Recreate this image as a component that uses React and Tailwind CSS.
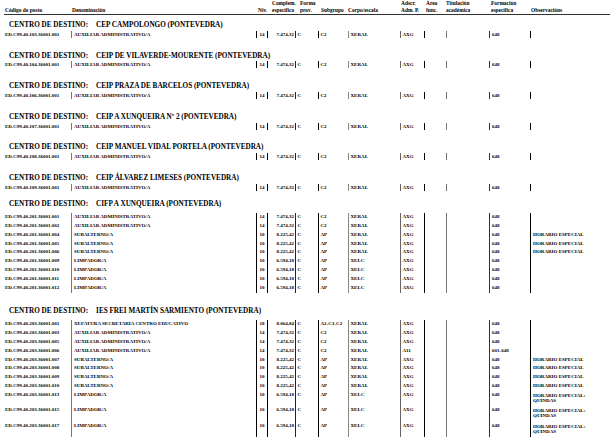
import React from "react";

const GRID =
  "grid grid-cols-[67px_185px_11px_28px_23px_30px_52px_24px_22px_43px_41px_80px]";

// cell styling per column: left rule + inner padding
const cells = [
  "pl-[1px]",
  "border-l border-[#777] pl-[2px]",
  "border-l border-black text-center",
  "border-l border-black text-right pr-[1px]",
  "border-l border-[#222] pl-[1.5px]",
  "border-l border-black pl-[1.5px]",
  "border-l border-[#888] pl-[1.5px]",
  "border-l border-[#666] pl-[1.5px]",
  "border-l border-black",
  "border-l border-[#777]",
  "border-l border-[#333] pl-[2px]",
  "border-l border-black pl-[2px]",
];

const heads = [
  { label: "Código do posto", pad: "pl-[1px]" },
  { label: "Denominación", pad: "pl-[1px]" },
  { label: "Niv.", pad: "pl-[2px]" },
  { top: "Complem.", label: "específico", pad: "pl-[5px]" },
  { top: "Forma", label: "prov.", pad: "pl-[5px]" },
  { label: "Subgrupo", pad: "pl-[3px]" },
  { label: "Corpo/escala", pad: "pl-[0px]" },
  { top: "Adscr.", label: "Adm. P.", pad: "pl-[1px]" },
  { top: "Área", label: "func.", pad: "pl-[2px]" },
  { top: "Titulación", label: "académica", pad: "pl-[0px]" },
  { top: "Formación", label: "específica", pad: "pl-[2px]" },
  { label: "Observacións", pad: "pl-[1px]" },
];

const aux = (code) => [code, "AUXILIAR ADMINISTRATIVO/A", "14", "7.474,32", "C", "C2", "XERAL", "AXG", "", "", "648", ""];
const sub = (code) => [code, "SUBALTERNO/A", "10", "8.225,42", "C", "AP", "XERAL", "AXG", "", "", "648", "HORARIO ESPECIAL"];
const limp = (code, obs = "") => [code, "LIMPADOR/A", "10", "6.594,18", "C", "AP", "XELC", "AXG", "", "", "648", obs];

const sections = [
  { name: "CEP CAMPOLONGO (PONTEVEDRA)", mt: "mt-[6px]", gap: "mt-[1.8px]", h: "h-[7px] leading-[7px]", rows: [aux("ED.C99.40.103.36001.001")] },
  { name: "CEIP DE VILAVERDE-MOURENTE (PONTEVEDRA)", mt: "mt-[13.8px]", gap: "mt-[1.8px]", h: "h-[7px] leading-[7px]", rows: [aux("ED.C99.40.104.36001.001")] },
  { name: "CEIP PRAZA DE BARCELOS (PONTEVEDRA)", mt: "mt-[13.8px]", gap: "mt-[1.8px]", h: "h-[7px] leading-[7px]", rows: [aux("ED.C99.40.106.36001.001")] },
  { name: "CEIP A XUNQUEIRA Nº 2 (PONTEVEDRA)", mt: "mt-[13.8px]", gap: "mt-[1.8px]", h: "h-[7px] leading-[7px]", rows: [aux("ED.C99.40.107.36001.001")] },
  { name: "CEIP MANUEL VIDAL PORTELA (PONTEVEDRA)", mt: "mt-[13.8px]", gap: "mt-[1.8px]", h: "h-[7px] leading-[7px]", rows: [aux("ED.C99.40.108.36001.001")] },
  { name: "CEIP ÁLVAREZ LIMESES (PONTEVEDRA)", mt: "mt-[13.8px]", gap: "mt-[1.8px]", h: "h-[7px] leading-[7px]", rows: [aux("ED.C99.40.109.36001.001")] },
  {
    name: "CIFP A XUNQUEIRA (PONTEVEDRA)",
    mt: "mt-[9.2px]",
    gap: "mt-[5.2px]",
    h: "h-[8.84px] leading-[8.84px]",
    rows: [
      aux("ED.C99.40.201.36001.001"),
      aux("ED.C99.40.201.36001.002"),
      sub("ED.C99.40.201.36001.004"),
      sub("ED.C99.40.201.36001.005"),
      sub("ED.C99.40.201.36001.006"),
      limp("ED.C99.40.201.36001.009"),
      limp("ED.C99.40.201.36001.010"),
      limp("ED.C99.40.201.36001.011"),
      limp("ED.C99.40.201.36001.012"),
    ],
  },
  {
    name: "IES FREI MARTÍN SARMIENTO (PONTEVEDRA)",
    mt: "mt-[14.8px]",
    gap: "mt-[4.9px]",
    h: "h-[8.84px] leading-[8.84px]",
    rows: [
      ["ED.C99.40.203.36001.001", "XEFATURA SECRETARÍA CENTRO EDUCATIVO", "18", "8.064,84", "C", "A2-C1-C2", "XERAL", "AXG", "", "", "648", ""],
      aux("ED.C99.40.203.36001.003"),
      aux("ED.C99.40.203.36001.005"),
      ["ED.C99.40.203.36001.006", "AUXILIAR ADMINISTRATIVO/A", "14", "7.474,32", "C", "C2", "XERAL", "A11", "", "", "601-648", ""],
      sub("ED.C99.40.203.36001.007"),
      sub("ED.C99.40.203.36001.008"),
      sub("ED.C99.40.203.36001.009"),
      sub("ED.C99.40.203.36001.010"),
      limp("ED.C99.40.203.36001.013", "Q"),
      limp("ED.C99.40.203.36001.015", "Q"),
      limp("ED.C99.40.203.36001.017", "Q"),
    ],
  },
];

function Row({ data, h }) {
  const tall = data[11] === "Q";
  return (
    <div className={`${GRID} ${tall ? "h-[15.5px] leading-[8.84px]" : h}`}>
      {data.map((v, i) =>
        tall && i === 11 ? (
          <div key={i} className={`${cells[i]} leading-[5px] pt-[1.9px]`}>
            HORARIO ESPECIAL:
            <br />
            QUINDAS
          </div>
        ) : (
          <div key={i} className={`${cells[i]} whitespace-nowrap`}>
            {v}
          </div>
        )
      )}
    </div>
  );
}

export default function App() {
  return (
    <div className="h-[439px] w-[615px] overflow-hidden bg-white text-black font-bold font-['Liberation_Serif','Times_New_Roman',serif]">
      <div className={`${GRID} ml-[4px] w-[606px] h-[15px] items-end border-b border-[#333] text-[5.4px] leading-[7px]`}>
        {heads.map((c, i) => (
          <div key={i} className={`${c.pad} whitespace-nowrap`}>
            {c.top && <div>{c.top}</div>}
            <div>{c.label}</div>
          </div>
        ))}
      </div>

      {sections.map((s) => (
        <div key={s.name} className={s.mt}>
          <div className="h-[8px] leading-[8px] text-[7.2px] pl-[9px] whitespace-nowrap">
            CENTRO DE DESTINO:<span className="ml-[8px]">{s.name}</span>
          </div>
          <div className={`${s.gap} ml-[4px] text-[5px]`}>
            {s.rows.map((r) => (
              <Row key={r[0]} data={r} h={s.h} />
            ))}
          </div>
        </div>
      ))}
    </div>
  );
}
